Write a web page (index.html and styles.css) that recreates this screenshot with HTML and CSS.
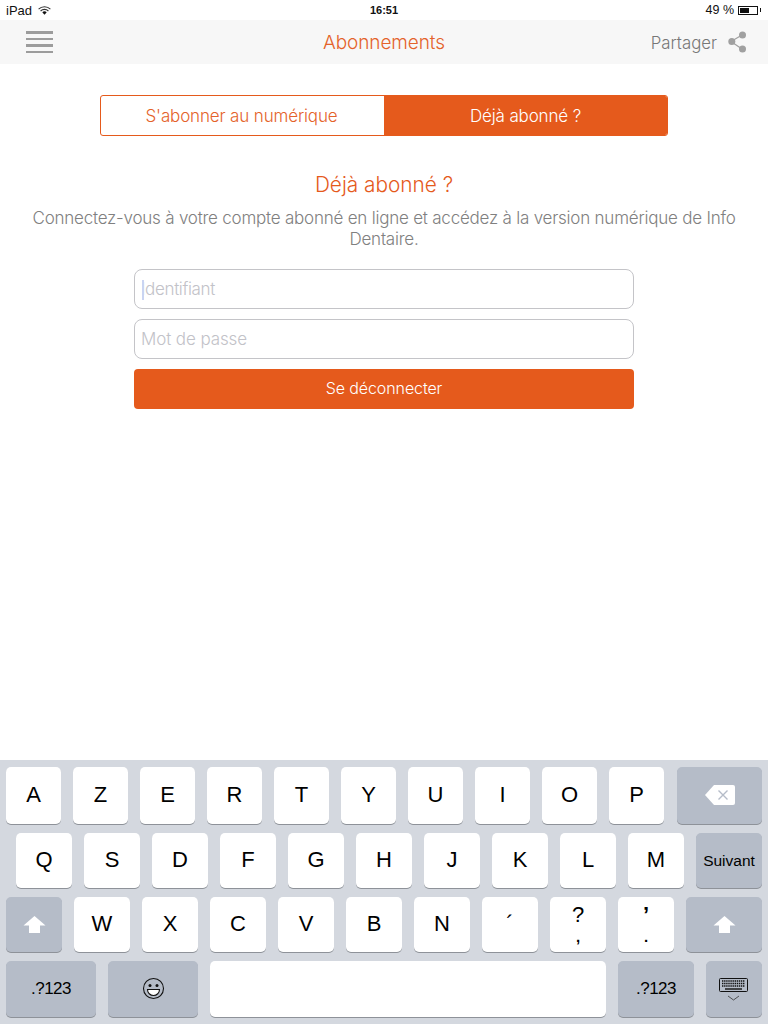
FILE: index.html
```html
<!DOCTYPE html>
<html lang="fr">
<head>
<meta charset="utf-8">
<title>Abonnements</title>
<link rel="stylesheet" href="styles.css">
</head>
<body>
<div class="screen">
  <div class="status">
    <div class="status-left">
      <span>iPad</span>
      <svg class="wifi" width="13" height="9" viewBox="0 0 13 9"><path d="M.6 3.1a8.4 8.4 0 0 1 11.8 0" fill="none" stroke="#333" stroke-width="1.1"/><path d="M2.6 5a5.6 5.6 0 0 1 7.8 0" fill="none" stroke="#333" stroke-width="1.1"/><path d="M4.3 6.3a3.1 3.1 0 0 1 4.4 0L6.5 8.7z" fill="#111"/></svg>
    </div>
    <div class="status-time">16:51</div>
    <div class="status-right">
      <span>49 %</span>
      <span class="battery"><span class="battery-fill"></span></span>
      <span class="battery-tip"></span>
    </div>
  </div>
  <header class="nav">
    <div class="nav-side nav-left">
      <div class="burger"><i></i><i></i><i></i><i></i></div>
    </div>
    <div class="nav-title">Abonnements</div>
    <div class="nav-side nav-right">
      <span class="share-label">Partager</span>
      <svg class="share" width="19" height="22" viewBox="0 0 19 22"><path d="M14 4 3 10.5 14 18" fill="none" stroke="#a0a0a0" stroke-width="1.2"/><circle cx="14.5" cy="4" r="3.5" fill="#a0a0a0"/><circle cx="3.8" cy="10.5" r="3.5" fill="#a0a0a0"/><circle cx="14.5" cy="18" r="3.5" fill="#a0a0a0"/></svg>
    </div>
  </header>
  <main class="content">
    <div class="tabs">
      <div class="tab tab-plain">S'abonner au numérique</div>
      <div class="tab tab-active">Déjà abonné ?</div>
    </div>
    <h1 class="heading">Déjà abonné ?</h1>
    <p class="intro">Connectez-vous à votre compte abonné en ligne et accédez à la version numérique de Info Dentaire.</p>
    <form class="form">
      <div class="field field-id"><span class="caret"></span>Identifiant</div>
      <div class="field">Mot de passe</div>
      <div class="submit">Se déconnecter</div>
    </form>
  </main>
  <section class="keyboard">
    <div class="row row-1">
      <div class="key">A</div><div class="key">Z</div><div class="key">E</div><div class="key">R</div><div class="key">T</div><div class="key">Y</div><div class="key">U</div><div class="key">I</div><div class="key">O</div><div class="key">P</div>
      <div class="key key-fn key-back">
        <svg width="32" height="22" viewBox="0 0 32 22"><path d="M10 1h19a2 2 0 0 1 2 2v16a2 2 0 0 1-2 2H10L1 11z" fill="#fff"/><path d="M14.5 6.5l9 9m0-9l-9 9" stroke="#b5bcc8" stroke-width="1.4"/></svg>
      </div>
    </div>
    <div class="row row-2">
      <div class="key">Q</div><div class="key">S</div><div class="key">D</div><div class="key">F</div><div class="key">G</div><div class="key">H</div><div class="key">J</div><div class="key">K</div><div class="key">L</div><div class="key">M</div>
      <div class="key key-fn key-next">Suivant</div>
    </div>
    <div class="row row-3">
      <div class="key key-fn key-shift-l"><svg width="23" height="19" viewBox="0 0 23 19"><path d="M11.5 1 22.5 10.5H17V18H6V10.5H.5z" fill="#fff"/></svg></div>
      <div class="key">W</div><div class="key">X</div><div class="key">C</div><div class="key">V</div><div class="key">B</div><div class="key">N</div>
      <div class="key key-acute">´</div>
      <div class="key key-double"><span class="top">?</span><span class="bottom">,</span></div>
      <div class="key key-double"><span class="top top-bold">’</span><span class="bottom">.</span></div>
      <div class="key key-fn key-shift-r"><svg width="23" height="19" viewBox="0 0 23 19"><path d="M11.5 1 22.5 10.5H17V18H6V10.5H.5z" fill="#fff"/></svg></div>
    </div>
    <div class="row row-4">
      <div class="key key-fn key-num-l">.?123</div>
      <div class="key key-fn key-emoji"><svg width="23" height="23" viewBox="0 0 23 23"><circle cx="11.5" cy="11.5" r="10" fill="none" stroke="#111" stroke-width="1.1"/><circle cx="8" cy="8.5" r="1.5" fill="#111"/><circle cx="15" cy="8.5" r="1.5" fill="#111"/><path d="M5.5 12.5h12a6 6 0 0 1-12 0z" fill="#fff" stroke="#111" stroke-width="1.1"/></svg></div>
      <div class="key key-space"></div>
      <div class="key key-fn key-num-r">.?123</div>
      <div class="key key-fn key-hide">
        <svg width="30" height="27" viewBox="0 0 30 27"><rect x=".5" y="3.5" width="28" height="13" rx="1" fill="none" stroke="#111"/><path d="M3 6h23M3 8.5h23M3 11h23" stroke="#111" stroke-width="1.6" stroke-dasharray="1.4 .7"/><path d="M6 14h17" stroke="#111" stroke-width="1.4"/><path d="M9 21l5.5 4 5.5-4" fill="none" stroke="#333" stroke-width=".8"/></svg>
      </div>
    </div>
  </section>
</div>
</body>
</html>
```
FILE: styles.css
```css
* { box-sizing: border-box; }
html, body { margin: 0; padding: 0; }
body { background: #fff; font-family: "Inter", "Liberation Sans", sans-serif; }
.screen { width: 768px; height: 1024px; display: flex; flex-direction: column; overflow: hidden; }

.status { height: 20px; padding: 0 6px; display: flex; align-items: center; justify-content: space-between; position: relative; font: 12.5px "Liberation Sans", sans-serif; color: #111; }
.status-left { display: flex; align-items: center; gap: 6px; font-size: 13px; }
.status-time { position: absolute; left: 0; right: 0; text-align: center; font-size: 11px; font-weight: 700; }
.status-right { display: flex; align-items: center; padding-right: 1px; }
.battery { width: 20px; height: 9px; border: 1px solid #111; margin-left: 4px; padding: 1px; display: block; }
.battery-fill { display: block; width: 9px; height: 100%; background: #111; }
.battery-tip { width: 1.5px; height: 4px; margin-left: 1.5px; background: #111; }

.nav { height: 44px; background: #f7f7f7; display: grid; grid-template-columns: 1fr auto 1fr; align-items: center; padding: 0 21px; }
.nav-side { display: flex; align-items: center; }
.nav-left { padding-left: 5px; }
.nav-right { justify-content: flex-end; gap: 11px; }
.nav-title { font-size: 19px; letter-spacing: -0.1px; font-weight: 300; color: #e4622a; }
.share-label { font-size: 16.8px; padding-top: 1px; font-weight: 300; color: #777; }
.burger { width: 27px; display: flex; flex-direction: column; gap: 4px; }
.burger i { display: block; height: 2.5px; background: #9c9c9c; }

.content { flex: 1; padding-top: 31px; display: flex; flex-direction: column; align-items: center; }
.tabs { width: 568px; height: 41px; display: flex; border: 1px solid #e55a1c; border-radius: 3px; overflow: hidden; }
.tab { flex: 0 0 50%; display: flex; align-items: center; justify-content: center; font-size: 17px; letter-spacing: -0.15px; font-weight: 300; color: #e4622a; }
.tab-plain { padding-right: 2px; }
.tab-active { background: #e55a1c; color: #fff; }
.heading { margin: 35px 0 0; font-size: 20.8px; line-height: 28px; font-weight: 300; color: #e55a1c; }
.intro { margin: 9px 0 0; width: 720px; text-align: center; font-size: 17px; letter-spacing: -0.22px; line-height: 21px; font-weight: 300; color: #808080; }
.form { width: 500px; margin-top: 19px; display: flex; flex-direction: column; gap: 10px; }
.field { height: 40px; border: 1px solid #c4c4c8; border-radius: 8px; padding-left: 6px; display: flex; align-items: center; position: relative; font-size: 17px; letter-spacing: -0.1px; font-weight: 300; color: #c2c2c8; }
.field-id { letter-spacing: -0.35px; }
.caret { position: absolute; left: 7px; top: 10px; width: 2px; height: 20px; background: #c9d4f2; }
.submit { height: 40px; padding-bottom: 2px; border-radius: 4px; background: #e55a1c; color: #fff; display: flex; align-items: center; justify-content: center; font-size: 16px; letter-spacing: -0.1px; font-weight: 300; }

.keyboard { height: 264px; background: #d4d8df; padding-top: 7px; display: flex; flex-direction: column; gap: 9px; font-family: "Liberation Sans", sans-serif; }
.row { display: flex; padding-left: 6px; height: 55px; }
.row-1 { height: 57px; gap: 12px; }
.row-1 .key { width: 55px; }
.row-2 { padding-left: 16px; gap: 12px; }
.row-2 .key { width: 56px; }
.row-3 { gap: 12px; }
.row-3 .key { width: 56px; }
.row-4 { height: 56px; gap: 12px; }
.key { background: #fff; border-radius: 5px; box-shadow: 0 1px 0 #8e9299; color: #000; display: flex; align-items: center; justify-content: center; font-size: 22px; padding-bottom: 1px; }
.row .key-fn { background: #b5bcc8; }
.row-1 .key-back { width: 85px; margin-left: 1px; }
.row-2 .key-next { width: 66px; font-size: 15.5px; padding-bottom: 0; }
.row-3 .key-shift-r { width: 76px; }
.key-num-l { width: 90px; font-size: 17px; letter-spacing: -0.5px; }
.key-emoji { width: 90px; }
.key-space { width: 396px; }
.key-num-r { width: 76px; font-size: 17px; letter-spacing: -0.5px; }
.key-hide { width: 56px; }
.key-double { flex-direction: column; justify-content: flex-start; padding: 5px 0 0; }
.key-double .top { line-height: 26px; }
.key-double .top-bold { font-weight: 700; }
.key-double .bottom { font-size: 15px; line-height: 18px; font-weight: 700; }
```
